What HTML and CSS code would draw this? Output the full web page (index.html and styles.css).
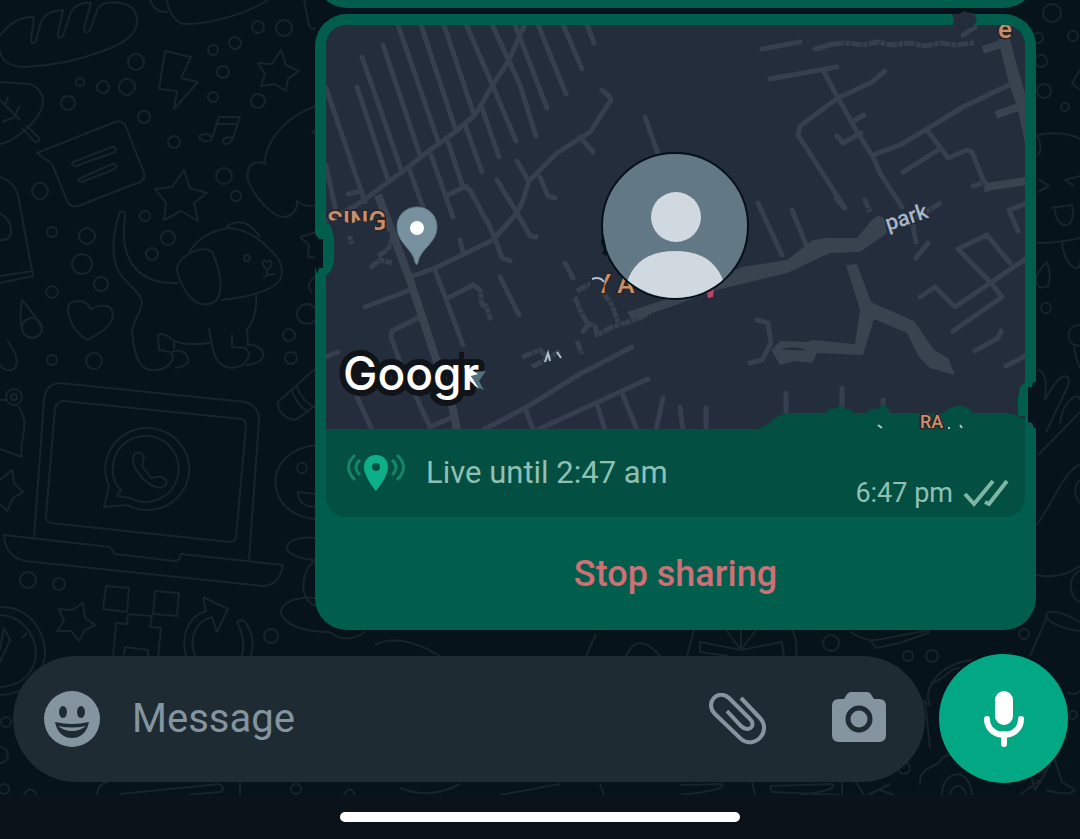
FILE: index.html
```html
<!DOCTYPE html>
<html lang="en">
  <head>
    <meta charset="UTF-8" />
    <meta name="viewport" content="width=device-width, initial-scale=1" />
    <title>Chat</title>
    <link rel="stylesheet" href="styles.css">
  </head>
  <body>
    <main class="chat">
      <!-- doodle wallpaper -->
      <svg class="wallpaper" aria-hidden="true">
        <!-- bread, bowl -->
        <path d="M0 36C10 22 20 17 34 17L31 40C31 44 35 44 36 40L41 22C45 13 55 10 63 10L58 34C58 40 62 38 64 33L71 12C76 4 84 2 91 3L84 28C84 33 88 34 90 30L98 8C103 1 115 2 125 4C135 7 137 15 137 23C136 36 120 45 105 50C80 60 50 66 25 67C10 67 0 60 0 50" />
        <path d="M150 0C153 8 158 13 168 12M167 0C168 10 173 20 183 24C210 25 250 12 268 0M304 0L309 26Q312 30 316 28" />
        <!-- bolt, stars, music -->
        <path d="M165 51L191 57L181 78L198 82L174 109L177 91L159 89Z" />
        <path d="M281 50L286 65L299 71L288 79L286 91L275 84L261 86L265 74L258 63L272 64Z" />
        <path d="M184 170L190 188L207 193L194 203L198 221L181 211L164 220L166 203L155 189L172 187Z" />
        <path d="M212 138L219 117L240 117L233 138M216 124H237M212 138C210 143 200 142 199 136C204 133 209 133 212 138M233 138C230 146 222 146 223 139C227 136 230 137 233 138" />
        <!-- leaf, speech bubble, bottle -->
        <path d="M0 82L30 84C42 89 46 100 41 110C36 122 15 142 0 144M0 100L20 120M5 105L8 97M15 116L19 106M15 117L2 122M22 128L35 142Q40 142 39 138L26 125" />
        <path d="M37 153L115 122Q122 120 126 127L144 173Q146 179 140 182L78 206Q70 208 67 201L52 164Z" />
        <path d="M73 162L112 147Q118 147 115 152L76 166Q71 166 73 162ZM79 179L112 164Q118 164 115 169L82 182Q77 182 79 179Z" />
        <path d="M0 177Q14 182 18 195L33 276L0 283M0 276L32 271M0 213Q12 220 11 234Q8 241 0 240" />
        <!-- cloud -->
        <path d="M316 106C290 115 268 135 264 163M267 164C250 158 246 170 248 180C255 200 275 218 285 217C292 216 298 210 297 201Q305 208 316 205M312 134Q314 130 318 128" />
        <!-- dog -->
        <path d="M133 328C135 318 141 312 142 302C140 290 122 282 117 268C110 250 115 225 120 212Q126 210 125 217C120 250 130 285 178 283" />
        <path d="M189 252C200 235 215 230 228 228C245 228 262 240 270 250C280 258 285 270 280 280C270 293 240 298 221 300M190 253C175 262 175 270 180 280C188 300 200 308 212 303C225 298 221 270 212 252Q205 246 190 253M226 227Q244 214 260 237M256 293Q258 315 248 328M267 270C259 262 264 258 267 262C272 258 274 264 267 270V275L263 278M267 275L275 274" />
        <path d="M132 328C133 350 138 368 150 370C168 372 178 358 170 352L159 350L158 335Q162 331 174 341Q190 346 210 343M172 352C184 345 200 366 175 368M174 341V349M209 328C212 350 215 368 232 368C248 367 253 352 245 348L232 347V334M247 328L248 345C262 343 275 362 246 365" />
        <!-- heart, drops -->
        <path d="M87 340C70 330 62 304 73 302Q85 298 91 309Q112 300 113 315Q112 328 87 340ZM22 300Q35 315 42 328C44 338 26 342 22 330Q19 315 22 300ZM7 340Q22 360 14 369Q6 373 0 365" />
        <!-- laptop -->
        <path d="M34 538L44 400Q45 384 60 383L245 402Q259 406 259 420L249 560" />
        <path d="M63 401L242 419Q246 421 246 426L236 537Q235 542 230 542L50 523Q45 520 46 516L55 408Q57 402 63 401Z" />
        <path d="M4 535L110 547L115 554L175 561Q180 561 181 554L283 565Q280 585 263 586L25 561Q5 557 4 535Z" />
        <path d="M109 486A42 41 0 1 1 127 505L104 507ZM118 487A33 33 0 1 1 130 498L117 496L121 490Z" />
        <path d="M133 459C132 452 142 450 144 457L142 466L151 478L157 477C164 476 169 482 165 486C155 494 133 473 133 459Z" />
        <!-- left side fish and star -->
        <path d="M0 400H8M18 406C32 425 18 440 22 457L0 449M0 480L12 470L14 483L23 492L13 498L7 511L0 504" />
        <path d="M83 603L85 618L95 625L85 630L79 641L71 631L57 631L64 621L59 609L72 610Z" />
        <!-- creeper, refresh, clock -->
        <path d="M106 586L129 588L127 612L103 609ZM155 591L179 593L177 616L153 614ZM128 614L152 616L150 627L161 628L158 658M128 614L127 624L116 623L113 658M124 655L125 647L148 650V658" />
        <path d="M203 597L228 609L217 632L212 617C194 622 188 640 196 658M203 597L206 611C186 617 180 640 187 658M237 622Q242 618 246 623C254 636 254 648 250 658M237 622C244 636 245 648 241 658" />
        <path d="M0 607C28 606 46 630 45 656C42 680 22 695 0 695M0 615C22 616 36 634 36 655C34 676 18 686 0 687M22 638L27 633M0 650L4 628L10 640L0 662" />
        <!-- edge of the bubble: sock, smiley, flower -->
        <path d="M316 368L278 402C276 412 290 422 297 419L316 405M296 385Q302 402 316 408M291 389Q297 406 309 412" />
        <path d="M316 445C262 450 262 515 316 519M316 494L298 492C298 504 308 508 316 506M316 538C280 534 275 558 316 560M316 560C300 570 298 600 316 606M316 598C265 595 270 632 330 632" />
        <path d="M300 237L316 232M300 237L309 245L308 257L320 258M316 276Q304 284 312 293" />
        <!-- strip under the bubble -->
        <path d="M687 656C690 645 692 638 694 630M741 650L726 630M741 650L756 630M741 650V630M741 650L700 642V652L728 656M741 650L782 642L784 656M796 656Q798 640 792 630M850 632Q868 642 876 640L930 630M870 640L876 648L900 643L930 632M330 632Q345 645 365 632M375 645Q400 632 440 656M586 656L596 634M626 656Q638 630 660 656" />
        <!-- right side -->
        <path d="M1080 70L1072 83L1080 90M1037 135C1060 130 1080 137 1080 140M1037 135Q1044 150 1037 156M1038 179L1049 186L1038 192M1080 176L1065 180L1074 186M1051 208L1072 205C1078 230 1056 232 1055 209M1037 243Q1060 243 1080 238M1062 240C1063 265 1080 276 1080 262M1047 262C1028 280 1038 292 1048 286Q1052 276 1047 262ZM1080 325C1062 325 1068 350 1080 345M1074 347Q1076 360 1080 368" />
        <path d="M1038 370C1048 372 1046 390 1045 400C1060 370 1072 372 1068 386L1046 432M1038 455L1080 412M1060 424C1062 400 1080 390 1080 400M1037 525C1060 490 1062 475 1080 464M1036 575Q1060 580 1080 566M1080 570C1064 580 1072 600 1080 602M1080 622C1050 605 1040 612 1050 621C1060 629 1075 630 1080 631M1047 617L1030 656M1080 480Q1070 490 1080 503M1068 693Q1078 696 1080 690" />
        <path d="M982 676Q990 650 1003 670M972 660C938 664 922 690 930 705L918 700M960 668C948 668 948 678 930 684M925 700L930 748M920 785C918 765 940 768 942 758Q960 748 972 768M942 795C942 770 970 765 972 795M950 795C952 783 964 783 966 795M1040 780L1020 795M1055 760L1062 782L1075 790Q1070 797 1046 790M1028 765L1035 790L1050 765" />
        <!-- strip under the composer -->
        <path d="M97 795Q98 783 108 782M120 794L220 784Q226 790 220 792L188 795M240 782V795M24 795Q30 784 37 795M344 795Q350 784 355 795M400 788Q430 800 460 784M500 795L560 784M600 784L604 795M680 785L722 784Q728 790 680 795M752 782L755 795M770 786L832 784Q840 790 800 795M770 786L772 792L840 795M842 782V795M856 782L864 795M868 795L890 784L880 790L894 795" />
        <g>
          <circle cx="136" cy="62" r="8" /><circle cx="80" cy="82" r="4" /><circle cx="103" cy="87" r="6" />
          <circle cx="127" cy="87" r="8" /><circle cx="68" cy="103" r="7" /><circle cx="144" cy="117" r="6" />
          <circle cx="174" cy="142" r="6" /><circle cx="213" cy="50" r="5" /><circle cx="235" cy="43" r="6" />
          <circle cx="258" cy="27" r="6" /><circle cx="284" cy="28" r="8" /><circle cx="223" cy="72" r="6" />
          <circle cx="213" cy="97" r="5" /><circle cx="258" cy="101" r="7" /><circle cx="224" cy="176" r="8" />
          <circle cx="236" cy="196" r="5" /><circle cx="145" cy="216" r="5" /><circle cx="168" cy="238" r="7" />
          <circle cx="152" cy="254" r="6" /><circle cx="40" cy="191" r="8" /><circle cx="52" cy="232" r="5" />
          <circle cx="87" cy="236" r="8" /><circle cx="82" cy="264" r="10" /><circle cx="101" cy="284" r="7" />
          <circle cx="52" cy="292" r="6" /><circle cx="307" cy="314" r="10" /><circle cx="247" cy="258" r="3" />
          <circle cx="32" cy="328" r="10" /><circle cx="52" cy="360" r="5" /><circle cx="94" cy="361" r="8" />
          <circle cx="289" cy="335" r="6" /><circle cx="291" cy="358" r="6" /><circle cx="14" cy="397" r="8" />
          <circle cx="14" cy="397" r="3" /><circle cx="302" cy="468" r="5" /><circle cx="28" cy="580" r="8" />
          <circle cx="59" cy="584" r="6" /><circle cx="271" cy="636" r="7" /><circle cx="6" cy="722" r="5" />
          <circle cx="0" cy="755" r="8" /><circle cx="4" cy="789" r="5" /><circle cx="296" cy="789" r="5" />
          <circle cx="1052" cy="13" r="9" /><circle cx="1073" cy="36" r="5" /><circle cx="1038" cy="38" r="5" />
          <circle cx="1041" cy="61" r="6" /><circle cx="1044" cy="91" r="7" /><circle cx="1065" cy="107" r="4" />
          <circle cx="1046" cy="308" r="5" /><circle cx="1024" cy="634" r="5" /><circle cx="831" cy="643" r="8" />
          <circle cx="908" cy="656" r="5" /><circle cx="932" cy="656" r="6" /><circle cx="1073" cy="715" r="4" />
          <circle cx="904" cy="768" r="6" />
        </g>
      </svg>

      <div class="messages">
        <div class="bubble -previous"></div>
        <article class="bubble">
          <div class="location">
            <svg class="map" viewBox="326 25 699 404" preserveAspectRatio="xMidYMid slice" role="img" aria-label="Map">
              <g class="street">
                <path d="M526 22L509 60L491 88L475 115L455 132L430 150L402 172L380 188L360 203L326 222" />
                <path d="M397 22L438 141M448 142L463 187L470 190L487 222M431 155L453 217M420 22L455 128M465 125L482 172" />
                <path d="M443 22L473 112M482 108L499 157M465 22L492 84L516 141M491 22L520 85L536 136M514 22L547 108" />
                <path d="M537 22L566 94M562 22L582 69M586 22L594 43M383 45L420 155M362 57L402 172M410 171L424 210" />
                <path d="M357 87L388 180M326 88L365 202M348 194L362 191M326 165L335 207M448 195L466 186" />
                <path d="M410 277L435 268L493 240L517 213L523 200L529 181L557 153L590 132L611 100L609 96L602 90" />
                <path d="M580 137L593 152M517 161L528 180M540 177L548 196L555 198M497 180L517 213L530 236L536 237" />
                <path d="M487 220L494 236L502 258L510 261M460 240L463 252M365 307L410 290M435 270L463 345M448 298L473 285" />
                <path d="M500 277L519 315M418 318L392 331L391 337L400 362L430 427L453 417M326 357L338 352M357 397L372 430" />
                <path d="M483 430L525 408L580 374L632 347M537 430L648 379M525 408L533 430M598 407L605 430M623 395L637 430M663 398L656 430" />
                <path d="M645 117L662 165M565 263L573 278M762 49L800 42M833 44L815 49M770 79L837 67M824 72L838 98L856 130L873 157L880 173L902 207" />
                <path d="M885 71L872 82L838 98L800 126L798 135L845 208M864 115L855 120M837 136L843 143L861 133" />
                <path d="M873 155L900 145L927 129L963 107L1009 85M927 130L948 158L967 150L972 152L983 180M938 150L903 172" />
                <path d="M1027 203L1009 210L1018 231M758 203L782 255M792 210L807 247M836 198L844 208M912 220L916 242M916 258L928 243" />
                <path d="M958 249L987 235L1010 263M958 249L992 284L1002 297L953 331M1027 258L955 307L935 287L920 297" />
                <path d="M1001 331L998 338L975 351M1006 366L1027 355M680 407L683 430M706 408V430M786 393V425M842 388V415M883 400V412" />
                <path d="M757 320L768 323L771 343L762 360L750 363M963 35L975 27" />
              </g>
              <!-- broken pieces of street -->
              <path class="street -rough" d="M833 44L850 43L862 45L878 42L892 45L910 43L925 46L940 43L955 45L974 43M473 285L480 290L482 305L486 306L491 320M575 297L580 310L587 323L595 326L597 335L612 327L640 318L650 312M603 292L612 305L618 322M582 333L590 323M577 291L592 283M522 357L540 350L548 358L560 351M532 367L545 360M577 341L582 354M330 228L345 222L352 244M370 268L380 260L392 263M378 256L388 250L392 240M864 198L870 212M916 218L942 202M971 187L985 182L987 192" />
              <path class="street -wide" d="M378 195L392 232L410 280L433 350L452 405L457 430" />
              <path class="street -wide" d="M986 187L1027 181M996 115L1018 107M983 50L1001 44" />
              <path class="road" d="M627 312L670 298L742 267L787 260L813 240L826 238L857 238L870 222L878 215L884 218L887 233L877 240L860 252L830 253L787 273L717 290L670 307L632 320Z" />
              <path class="road" d="M846 265L857 264L871 302L914 321L934 350L948 358L955 375L930 368L919 357L907 333L874 319L863 355L817 353L812 363L795 361L780 365L771 350L780 341L808 342L812 340L855 344L860 310Z" />
              <path class="road" d="M998 39L1010 39L1017 66L1026 97V148L1018 110L1008 80Z" />
              <path class="tear" d="M780 349Q795 345 807 350Q795 351 780 349Z" />

              <text class="poi" x="327" y="230">SING</text>
              <path class="tear" d="M326 222L340 219L350 224L360 220L367 222L375 219V232H390V236H326Z" />
              <text class="poi" x="998" y="38">e</text>
              <text class="poi" x="595" y="293">Y A</text>
              <path class="tear" d="M590 272H606L604 286L600 295H590Z" />
              <path class="spark" d="M592 279Q600 276 604 282M545 362L548 353L550 361M557 352L561 358" />
              <text class="park" x="888" y="231" transform="rotate(-18 888 231)">park</text>
              <path class="flag" d="M706 286L714 288L713 297L708 298Z" />

              <!-- place pin -->
              <path class="pin" d="M417 207C405 207 397 216 397 227C397 243 413 249 415 262Q417 267 418 262C420 249 437 243 437 227C437 216 429 207 417 207Z" />
              <circle cx="417" cy="228" r="7" fill="#fff" />

              <!-- avatar on the shared position -->
              <circle cx="675" cy="226" r="73" fill="#627884" stroke="#06101a" stroke-width="2" />
              <clipPath id="avatar"><circle cx="675" cy="226" r="72" /></clipPath>
              <g clip-path="url(#avatar)" fill="#d0d8e0">
                <circle cx="676" cy="217" r="25" />
                <path d="M625 290C630 263 648 251 675 251C703 251 720 263 726 290L700 305H650Z" />
              </g>
              <path d="M603 234L601 242L604 250L602 253L606 256L606 248L605 242Z" fill="#06101a" />

              <text class="brand" x="343" y="390">Googr</text>
              <path d="M459 352V374L464 362V352Z" fill="#101418" />
              <path d="M471 372L486 371L479 381L484 390L474 386Z" fill="#53707d" />
              <path d="M464 366L472 370L478 374L471 376L479 389L470 381Z" fill="#fff" />

              <!-- torn bottom edge -->
              <path class="torn" d="M755 430L765 426L780 415L790 413H826L830 408L835 409L840 405L845 409H850L854 413H866L870 409L878 409L882 404L889 409L890 413H943L950 408L960 405L970 409L972 413H1006L1015 415L1026 419V430Z" />
              <text class="poi -small" x="920" y="428">RA</text>
              <path class="spark" d="M878 425L882 428M960 425L962 428M948 428H950" />
            </svg>
            <div class="details">
              <svg class="live" width="60" height="40" viewBox="0 0 60 40" aria-hidden="true">
                <path d="M30 2C22 2 18 8 18 14C18 24 30 38 30 38S42 24 42 14C42 8 38 2 30 2ZM30 10A4 4 0 1 1 30 18A4 4 0 1 1 30 10Z" fill="#0caf88" fill-rule="evenodd" />
                <path d="M9 2Q-4 14 9 27M14 7Q6 14 14 22M46 7Q54 14 46 22M51 2Q64 14 51 27" fill="none" stroke="#178467" stroke-width="3" />
              </svg>
              <p class="until">Live until 2:47 am</p>
              <p class="time">
                <time>6:47 pm</time>
                <svg width="46" height="30" viewBox="0 0 46 30" aria-label="Delivered">
                  <path d="M2 16L11 26L30 3M22 24L26 26L44 3" fill="none" stroke="#7fb5a6" stroke-width="4" />
                </svg>
              </p>
            </div>
          </div>
          <button class="stop" type="button">Stop sharing</button>
          <!-- ragged spots on the frame -->
          <svg class="ragged" width="20" height="56" viewBox="0 0 20 56" aria-hidden="true">
            <path d="M11 0L16 4L19 16V40L16 48L11 54Z" fill="#015e4c" />
            <path d="M0 12L4 17H8V46L4 46L2 52L0 44Z" fill="#07131a" />
          </svg>
          <svg class="ragged -right" width="20" height="56" viewBox="0 0 20 56" aria-hidden="true">
            <path d="M9 6L4 11L2 22V40H9Z" fill="#015e4c" />
            <path d="M20 6L17 6L16 11H12V46L16 47L18 52H20Z" fill="#07131a" />
          </svg>
          <svg class="ragged -top" width="30" height="18" viewBox="0 0 30 18" aria-hidden="true">
            <path d="M2 4L9 4L14 1L20 3L24 3L27 11L22 18H2L4 10Z" fill="#232d3c" />
          </svg>
        </article>
      </div>

      <form class="composer">
        <div class="field">
          <button class="icon" type="button" aria-label="Emoji">
            <svg width="56" height="56" viewBox="0 0 56 56">
              <circle cx="28" cy="28" r="28" fill="#84959f" />
              <ellipse cx="19" cy="21" rx="4" ry="6" />
              <ellipse cx="37" cy="21" rx="4" ry="6" />
              <path d="M11 31Q28 35 45 31C43 41 37 47 28 47S13 41 11 31Z" />
              <path d="M14 35Q28 38 42 35Q36 40 28 40T14 35Z" fill="#84959f" />
            </svg>
          </button>
          <input class="message" type="text" placeholder="Message" aria-label="Message" />
          <button class="icon" type="button" aria-label="Attach">
            <svg width="58" height="52" viewBox="0 0 58 52">
              <path d="M32 5L51 25C63 38 46 57 32 46L6 21C-5 10 9 -5 20 5L41 26C48 33 39 40 32 33L18 18" fill="none" stroke="#84959f" stroke-width="4" />
            </svg>
          </button>
          <button class="icon" type="button" aria-label="Camera">
            <svg width="56" height="56" viewBox="0 0 56 56">
              <path d="M20 1H36Q39 1 41 5L43 8H48Q55 8 55 15V44Q55 51 48 51H8Q1 51 1 44V15Q1 8 8 8H13L15 5Q17 1 20 1Z" fill="#84959f" />
              <circle cx="28" cy="28" r="11" fill="#84959f" stroke="#1f2b33" stroke-width="5" />
            </svg>
          </button>
        </div>
        <button class="mic" type="button" aria-label="Voice message">
          <svg width="42" height="58" viewBox="0 0 42 58">
            <rect x="12" y="1" width="18" height="34" rx="9" fill="#fff" />
            <path d="M4 29C4 50 38 50 38 29M21 44V54" fill="none" stroke="#fff" stroke-width="6" stroke-linecap="round" />
          </svg>
        </button>
      </form>

      <footer class="navbar"><span class="handle"></span></footer>
    </main>
  </body>
</html>
```
FILE: styles.css
```css
* {
  box-sizing: border-box;
  margin: 0;
  padding: 0;
}

body {
  font-family: Roboto, "Liberation Sans", sans-serif;
  background-color: #07131a;
}

button {
  border: 0;
  background: none;
  font-family: inherit;
  cursor: pointer;
}

svg {
  display: block;
}

.chat {
  position: relative;
  display: flex;
  flex-direction: column;
  min-height: 100vh;
  overflow: hidden;
}

.wallpaper {
  position: absolute;
  top: 0;
  left: 0;
  width: 100%;
  height: 100%;
  fill: none;
  stroke: #18242b;
  stroke-width: 2;
  stroke-linejoin: round;
}

/* messages */

.messages {
  position: relative;
  flex: 1;
  display: flex;
  flex-direction: column;
  gap: 6px;
  padding: 0 44px 24px 315px;
}

.bubble {
  position: relative;
  padding: 11px 11px 0;
  border-radius: 32px;
  background-color: #015e4c;
}

/* only its bottom edge is scrolled into view */
.bubble.-previous {
  height: 72px;
  margin-top: -64px;
  padding: 0;
}

.location {
  overflow: hidden;
  border-radius: 20px;
  background-color: #034f41;
}

.map {
  width: 100%;
  height: 404px;
  background-color: #232d3c;
}

.street {
  fill: none;
  stroke: #353f4e;
  stroke-width: 5;
  stroke-linecap: round;
  stroke-linejoin: round;
}

.street.-rough {
  stroke-width: 5;
  stroke-dasharray: 11 1 5 1;
  stroke-linecap: butt;
}

.street.-wide {
  stroke: #39434f;
  stroke-width: 8;
  stroke-linecap: butt;
}

.road {
  fill: #39434f;
}

.poi {
  font-size: 26px;
  font-weight: 500;
  fill: #c98f6c;
  stroke: #2a2426;
  stroke-width: 3;
  paint-order: stroke;
}

.poi.-small {
  font-size: 18px;
}

.park {
  font-size: 22px;
  font-weight: 500;
  fill: #a9b6c6;
  stroke: #232d3c;
  stroke-width: 3;
  paint-order: stroke;
}

.brand {
  font-family: Inter, "Liberation Sans", sans-serif;
  font-size: 46px;
  font-weight: 500;
  fill: #fff;
  stroke: #101418;
  stroke-width: 12;
  stroke-linejoin: round;
  paint-order: stroke;
}

.tear {
  fill: #232d3c;
}

.torn {
  fill: #034f41;
}

.spark {
  fill: none;
  stroke: #b4c2cc;
  stroke-width: 2;
}

.flag {
  fill: #b8456a;
}

.pin {
  fill: #78919e;
  stroke: #5e7886;
}

.details {
  display: flex;
  align-items: center;
  height: 88px;
  padding: 0 16px 0 20px;
}

.until {
  flex: 1;
  margin-left: 20px;
  font-size: 31px;
  line-height: 40px;
  color: #8fc0b3;
}

.time {
  display: flex;
  align-items: center;
  align-self: flex-end;
  gap: 10px;
  padding-bottom: 8px;
  font-size: 27px;
  line-height: 32px;
  color: #8fc0b3;
}

.stop {
  display: block;
  width: 100%;
  height: 113px;
  font-size: 36px;
  font-weight: 500;
  color: #cf6f76;
}

.ragged {
  position: absolute;
  top: 208px;
  left: 0;
}

.ragged.-right {
  top: 362px;
  right: 0;
  left: auto;
}

.ragged.-top {
  top: -4px;
  right: 56px;
  left: auto;
}

/* composer */

.composer {
  position: relative;
  display: flex;
  align-items: center;
  gap: 14px;
  padding: 0 12px 12px 13px;
}

.field {
  flex: 1;
  display: flex;
  align-items: center;
  min-width: 0;
  height: 126px;
  padding: 0 38px 0 31px;
  border-radius: 63px;
  background-color: #1f2b33;
}

.icon {
  flex: none;
  fill: #1f2b33;
}

.icon + .icon {
  margin-left: 64px;
}

.message {
  flex: 1;
  min-width: 0;
  margin: 0 32px;
  border: 0;
  outline: 0;
  background: none;
  font-family: inherit;
  font-size: 40px;
  line-height: 48px;
  color: #e9edef;
}

.message::placeholder {
  color: #84959f;
  opacity: 1;
}

.mic {
  flex: none;
  display: flex;
  align-items: center;
  justify-content: center;
  width: 129px;
  height: 129px;
  border-radius: 50%;
  background-color: #02a884;
}

.navbar {
  position: relative;
  display: flex;
  justify-content: center;
  height: 45px;
  padding-top: 17px;
  background-color: #0b121a;
}

.handle {
  width: 37%;
  height: 10px;
  border-radius: 5px;
  background-color: #fff;
}
```
